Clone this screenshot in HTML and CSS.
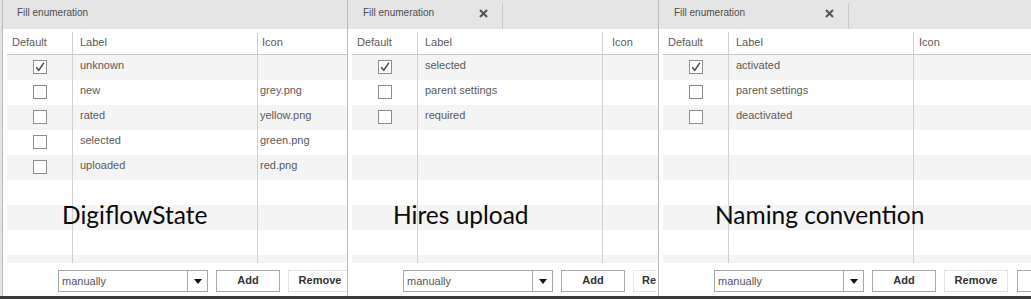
FILE: index.html
```html
<!DOCTYPE html>
<html>
<head>
<meta charset="utf-8">
<link rel="stylesheet" href="styles.css">
</head>
<body>
<div class="stage">
  <div class="edge"></div>

  <section class="panel p1">
    <div class="titlebar">
      <div class="tab tab-plain"><span class="title">Fill enumeration</span></div>
    </div>
    <div class="grid">
      <div class="thead">
        <div class="c1 th">Default</div>
        <div class="c2 th">Label</div>
        <div class="c3 th icon-h">Icon</div>
      </div>
      <div class="tbody">
        <div class="row alt"><div class="c1"><span class="cb on"><svg viewBox="0 0 14 14" width="12" height="12"><path d="M2.5 7.2 L5.6 10.8 L11.6 1.8" fill="none" stroke="#4a4a4a" stroke-width="1.7"/></svg></span></div><div class="c2">unknown</div><div class="c3 icn"></div></div>
        <div class="row"><div class="c1"><span class="cb"></span></div><div class="c2">new</div><div class="c3 icn">grey.png</div></div>
        <div class="row alt"><div class="c1"><span class="cb"></span></div><div class="c2">rated</div><div class="c3 icn">yellow.png</div></div>
        <div class="row"><div class="c1"><span class="cb"></span></div><div class="c2">selected</div><div class="c3 icn">green.png</div></div>
        <div class="row alt"><div class="c1"><span class="cb"></span></div><div class="c2">uploaded</div><div class="c3 icn">red.png</div></div>
        <div class="row"><div class="c1"></div><div class="c2"></div><div class="c3"></div></div>
        <div class="row alt"><div class="c1"></div><div class="c2"></div><div class="c3"></div></div>
        <div class="row"><div class="c1"></div><div class="c2"></div><div class="c3"></div></div>
        <div class="row alt"><div class="c1"></div><div class="c2"></div><div class="c3"></div></div>
      </div>
    </div>
    <div class="footer">
      <div class="select"><span class="sel-text">manually</span><span class="sel-arrow"><svg width="8" height="5" viewBox="0 0 8 5"><path d="M0 0 H8 L4 5 Z" fill="#111"/></svg></span></div>
      <button class="btn">Add</button>
      <button class="btn btn-light">Remove</button>
    </div>
    <div class="caption cap1">DigiflowState</div>
  </section>

  <section class="panel p2">
    <div class="titlebar">
      <div class="tab tab-w2"><span class="title">Fill enumeration</span><span class="close"><svg width="9" height="9" viewBox="0 0 9 9"><path d="M1 1 L8 8 M8 1 L1 8" stroke="#555" stroke-width="2.1" stroke-linecap="butt"/></svg></span></div>
    </div>
    <div class="grid">
      <div class="thead">
        <div class="c1 th">Default</div>
        <div class="c2 th">Label</div>
        <div class="c3 th icon-h2">Icon</div>
      </div>
      <div class="tbody">
        <div class="row alt"><div class="c1"><span class="cb on"><svg viewBox="0 0 14 14" width="12" height="12"><path d="M2.5 7.2 L5.6 10.8 L11.6 1.8" fill="none" stroke="#4a4a4a" stroke-width="1.7"/></svg></span></div><div class="c2">selected</div><div class="c3"></div></div>
        <div class="row"><div class="c1"><span class="cb"></span></div><div class="c2">parent settings</div><div class="c3"></div></div>
        <div class="row alt"><div class="c1"><span class="cb"></span></div><div class="c2">required</div><div class="c3"></div></div>
        <div class="row"><div class="c1"></div><div class="c2"></div><div class="c3"></div></div>
        <div class="row alt"><div class="c1"></div><div class="c2"></div><div class="c3"></div></div>
        <div class="row"><div class="c1"></div><div class="c2"></div><div class="c3"></div></div>
        <div class="row alt"><div class="c1"></div><div class="c2"></div><div class="c3"></div></div>
        <div class="row"><div class="c1"></div><div class="c2"></div><div class="c3"></div></div>
        <div class="row alt"><div class="c1"></div><div class="c2"></div><div class="c3"></div></div>
      </div>
    </div>
    <div class="footer">
      <div class="select"><span class="sel-text">manually</span><span class="sel-arrow"><svg width="8" height="5" viewBox="0 0 8 5"><path d="M0 0 H8 L4 5 Z" fill="#111"/></svg></span></div>
      <button class="btn">Add</button>
      <button class="btn btn-light btn-cut">Re</button>
    </div>
    <div class="caption cap2">Hires upload</div>
  </section>

  <section class="panel p3">
    <div class="titlebar">
      <div class="tab tab-w3"><span class="title">Fill enumeration</span><span class="close"><svg width="9" height="9" viewBox="0 0 9 9"><path d="M1 1 L8 8 M8 1 L1 8" stroke="#555" stroke-width="2.1" stroke-linecap="butt"/></svg></span></div>
    </div>
    <div class="grid">
      <div class="thead">
        <div class="c1 th">Default</div>
        <div class="c2 th">Label</div>
        <div class="c3 th">Icon</div>
      </div>
      <div class="tbody">
        <div class="row alt"><div class="c1"><span class="cb on"><svg viewBox="0 0 14 14" width="12" height="12"><path d="M2.5 7.2 L5.6 10.8 L11.6 1.8" fill="none" stroke="#4a4a4a" stroke-width="1.7"/></svg></span></div><div class="c2">activated</div><div class="c3"></div></div>
        <div class="row"><div class="c1"><span class="cb"></span></div><div class="c2">parent settings</div><div class="c3"></div></div>
        <div class="row alt"><div class="c1"><span class="cb"></span></div><div class="c2">deactivated</div><div class="c3"></div></div>
        <div class="row"><div class="c1"></div><div class="c2"></div><div class="c3"></div></div>
        <div class="row alt"><div class="c1"></div><div class="c2"></div><div class="c3"></div></div>
        <div class="row"><div class="c1"></div><div class="c2"></div><div class="c3"></div></div>
        <div class="row alt"><div class="c1"></div><div class="c2"></div><div class="c3"></div></div>
        <div class="row"><div class="c1"></div><div class="c2"></div><div class="c3"></div></div>
        <div class="row alt"><div class="c1"></div><div class="c2"></div><div class="c3"></div></div>
      </div>
    </div>
    <div class="footer">
      <div class="select"><span class="sel-text">manually</span><span class="sel-arrow"><svg width="8" height="5" viewBox="0 0 8 5"><path d="M0 0 H8 L4 5 Z" fill="#111"/></svg></span></div>
      <button class="btn">Add</button>
      <button class="btn btn-light">Remove</button>
      <button class="btn btn-gap"></button>
    </div>
    <div class="caption cap3">Naming convention</div>
  </section>
</div>
</body>
</html>
```

FILE: styles.css
```css
* { box-sizing: border-box; }
html, body { margin: 0; padding: 0; }
body {
  width: 1031px;
  height: 299px;
  overflow: hidden;
  background: #3a3a3a;
  font-family: "Liberation Sans", Arial, sans-serif;
  font-size: 11px;
  color: #5a5a5a;
}
.stage {
  display: flex;
  height: 296px;
  background: #fff;
  overflow: hidden;
}
.edge {
  flex: none;
  width: 2px;
  background: #e4e4e4;
}
.panel {
  position: relative;
  flex: none;
  height: 296px;
  border-left: 1px solid #b9b9b9;
  background: #fff;
  overflow: hidden;
  display: flex;
  flex-direction: column;
}
.p1 { width: 345px; }
.p2 { width: 311px; }
.p3 { width: 373px; }

.titlebar {
  flex: none;
  height: 29px;
  background: #e5e5e5;
  display: flex;
}
.tab {
  flex: none;
  display: flex;
  align-items: flex-start;
  height: 26px;
  margin-top: 3px;
  padding-left: 15px;
  border-right: 1px solid #cacaca;
}
.tab-plain { border-right: none; padding-left: 14px; }
.tab-w2 { width: 155px; }
.tab-w3 { width: 190px; }
.title {
  font-size: 10px;
  line-height: 12px;
  padding-top: 4px;
  color: #4d4d4d;
}
.close {
  margin-left: auto;
  margin-right: 14px;
  padding-top: 6px;
  display: flex;
}

.grid {
  flex: none;
  margin-left: 4px;
  margin-top: 3px;
}
.thead {
  display: flex;
  height: 23px;
  border-bottom: 1px solid #c6c6c6;
}
.th { line-height: 21px; }
.tbody {
  height: 208px;
  overflow: hidden;
}
.row {
  display: flex;
  height: 25px;
}
.row.alt { background: #f4f4f4; }
.c1 {
  flex: none;
  width: 66px;
  border-right: 1px solid #d0d0d0;
  padding-left: 5px;
  line-height: 21px;
}
.row .c1 { padding-left: 0; display: flex; justify-content: center; }
.c2 {
  flex: none;
  width: 185px;
  border-right: 1px solid #d0d0d0;
  padding-left: 7px;
  line-height: 21px;
  white-space: nowrap;
}
.c3 {
  flex: 1;
  padding-left: 5px;
  line-height: 21px;
  white-space: nowrap;
}
.icn { padding-left: 2px; }
.icon-h { padding-left: 4px; }
.icon-h2 { padding-left: 9px; }
.cb {
  display: flex;
  align-items: center;
  justify-content: center;
  width: 14px;
  height: 14px;
  margin-top: 5px;
  border: 1px solid #8c8c8c;
  background: #fff;
}

.footer {
  flex: none;
  display: flex;
  align-items: flex-start;
  padding-top: 7px;
  padding-left: 55px;
}
.select {
  flex: none;
  display: flex;
  width: 150px;
  height: 22px;
  border: 1px solid #a6a6a6;
  background: #fff;
}
.sel-text {
  flex: 1;
  padding-left: 3px;
  line-height: 21px;
  color: #555;
}
.sel-arrow {
  flex: none;
  width: 20px;
  border-left: 1px solid #a6a6a6;
  display: flex;
  align-items: center;
  justify-content: center;
}
.btn {
  flex: none;
  width: 64px;
  height: 22px;
  margin-left: 8px;
  padding: 0 0 3px;
  border: 1px solid #a9a9a9;
  background: #fff;
  font-family: "Liberation Sans", Arial, sans-serif;
  font-size: 11px;
  font-weight: bold;
  color: #333;
  line-height: 16px;
}
.btn-light { border-color: #e3e3e3; }
.btn-cut {
  width: 23px;
  text-align: left;
  padding-left: 8px;
  padding-right: 0;
  border-right: none;
  white-space: nowrap;
}
.btn-gap { margin-left: 9px; }

.caption {
  position: absolute;
  top: 200px;
  font-family: Lato, "Open Sans", sans-serif;
  font-size: 24.5px;
  line-height: 30px;
  color: #0a0a0a;
  white-space: nowrap;
}
.cap1 { left: 59px; }
.cap2 { left: 45px; }
.cap3 { left: 56px; }
```
